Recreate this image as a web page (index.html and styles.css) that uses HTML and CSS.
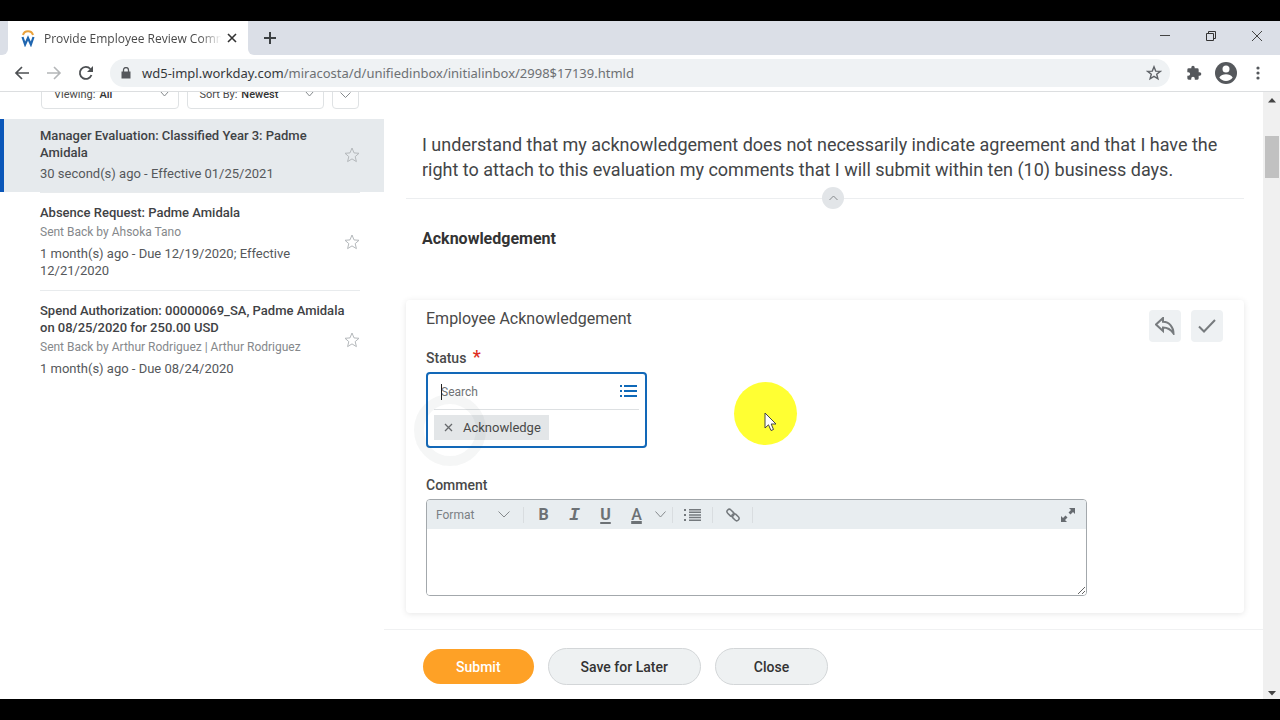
FILE: index.html
```html
<!DOCTYPE html>
<html lang="en">
<head>
    <meta charset="UTF-8">
    <meta name="viewport" content="width=device-width, initial-scale=1.0">
    <title>Provide Employee Review Comments</title>
    <link rel="stylesheet" href="styles.css">
</head>
<body>
    <div class="browser">
        <div class="tab-strip">
            <div class="tab-edge"></div>
            <div class="tab">
                <svg class="favicon" width="14" height="18" viewBox="0 0 14 18" fill="none">
                    <path d="M2 6a5.2 5.2 0 0 1 10 0" stroke="#e9a13b" stroke-width="2"/>
                    <path d="M1.5 8l2.6 7.500L7 9l2.900 6.500L12.500 8" stroke="#1f66b0" stroke-width="2.200"/>
                </svg>
                <span class="tab-title">Provide Employee Review Comm</span>
                <button class="icon-btn" aria-label="Close tab">
                    <svg width="10" height="10" viewBox="0 0 10 10" stroke="#333" stroke-width="1.600"><path d="M1 1l8 8M9 1l-8 8"/></svg>
                </button>
            </div>
            <div class="tab-rest">
                <button class="icon-btn" aria-label="New tab">
                    <svg width="12" height="12" viewBox="0 0 12 12" stroke="#3c4043" stroke-width="2"><path d="M6 0v12M0 6h12"/></svg>
                </button>
                <div class="window-controls">
                    <button class="icon-btn" aria-label="Minimize"><svg width="12" height="12" viewBox="0 0 12 12" stroke="#444"><path d="M1 5.500h10"/></svg></button>
                    <button class="icon-btn" aria-label="Restore"><svg width="12" height="12" viewBox="0 0 12 12" fill="none" stroke="#333"><path d="M1.500 3.500h7v7h-7zM3.500 3.500v-2h7v7h-2"/></svg></button>
                    <button class="icon-btn" aria-label="Close window"><svg width="12" height="12" viewBox="0 0 12 12" stroke="#444"><path d="M1 1l10 10M11 1L1 11"/></svg></button>
                </div>
            </div>
        </div>

        <div class="toolbar">
            <button class="icon-btn" aria-label="Back"><svg width="16" height="16" viewBox="0 0 16 16" fill="none" stroke="#4d5053" stroke-width="1.700"><path d="M15 8H2M8 2L2 8l6 6"/></svg></button>
            <button class="icon-btn" aria-label="Forward"><svg width="16" height="16" viewBox="0 0 16 16" fill="none" stroke="#b4b6b8" stroke-width="1.600"><path d="M1 8h13M8 2l6 6-6 6"/></svg></button>
            <button class="icon-btn" aria-label="Reload"><svg width="16" height="16" viewBox="0 0 16 16"><path d="M13.500 10A6 6 0 1 1 12.400 4" fill="none" stroke="#4d5053" stroke-width="1.800"/><path d="M15 1v6H9z" fill="#4d5053"/></svg></button>
            <div class="address">
                <svg width="10" height="12" viewBox="0 0 10 12"><path d="M0.500 4.500h9v7h-9z" fill="#55585c"/><path d="M2.500 5V3a2.500 2.500 0 0 1 5 0v2" fill="none" stroke="#55585c" stroke-width="1.300"/></svg>
                <span class="url">wd5-impl.workday.com<span class="url-path">/miracosta/d/unifiedinbox/initialinbox/2998$17139.htmld</span></span>
                <svg width="16" height="16" viewBox="0 0 16 16" fill="none" stroke="#5f6368" stroke-width="1.400"><path d="M8 1.800l1.700 4.300 4.600.3-3.600 2.900 1.200 4.500L8 11.300l-3.900 2.500 1.200-4.500L1.700 6.400l4.600-.3z"/></svg>
            </div>
            <div class="toolbar-end">
                <button class="icon-btn" aria-label="Extensions"><svg width="16" height="16" viewBox="0 0 24 24" fill="#55585c"><path d="M20.500 11H19V7a2 2 0 0 0-2-2h-4V3.500a2.500 2.500 0 0 0-5 0V5H4a2 2 0 0 0-2 2v3.800h1.500a2.700 2.700 0 0 1 0 5.400H2V20a2 2 0 0 0 2 2h3.800v-1.500a2.700 2.700 0 0 1 5.400 0V22H17a2 2 0 0 0 2-2v-4h1.500a2.500 2.500 0 0 0 0-5z"/></svg></button>
                <button class="icon-btn" aria-label="Profile"><svg width="22" height="22" viewBox="0 0 22 22"><circle cx="11" cy="11" r="11" fill="#55585c"/><circle cx="11" cy="7" r="3.500" fill="#fff"/><path d="M4.300 15.500c1.400-2.400 4-3.300 6.700-3.300s5.300.9 6.700 3.300c-1.500 2.200-4 3.500-6.700 3.500s-5.200-1.300-6.700-3.500z" fill="#fff"/></svg></button>
                <button class="icon-btn" aria-label="Menu"><svg width="16" height="16" viewBox="0 0 16 16" fill="#55585c"><circle cx="8" cy="3" r="1.600"/><circle cx="8" cy="8" r="1.600"/><circle cx="8" cy="13" r="1.600"/></svg></button>
            </div>
        </div>

        <div class="page">
            <aside class="inbox">
                <div class="filters">
                    <div class="filter">
                        <label for="viewing">Viewing:</label>
                        <select id="viewing"><option>All</option></select>
                        <svg class="chevron" width="9" height="6" viewBox="0 0 9 6"><path d="M0.500 0.500l4 4.500 4-4.500"/></svg>
                    </div>
                    <div class="filter">
                        <label for="sort">Sort By:</label>
                        <select id="sort"><option>Newest</option></select>
                        <svg class="chevron" width="9" height="6" viewBox="0 0 9 6"><path d="M0.500 0.500l4 4.500 4-4.500"/></svg>
                    </div>
                    <button class="filter-more" aria-label="More options">
                        <svg class="chevron" width="11" height="6" viewBox="0 0 11 6"><path d="M0.500 0.500l5 5 5-5"/></svg>
                    </button>
                </div>

                <div class="item selected">
                    <div class="item-body">
                        <div class="item-text">
                            <h3>Manager Evaluation: Classified Year 3: Padme Amidala</h3>
                            <p class="when">30 second(s) ago - Effective 01/25/2021</p>
                        </div>
                        <button class="icon-btn star" aria-label="Favorite"><svg width="16" height="16" viewBox="0 0 16 16"><path d="M8 1l2 4.900 5 .4-3.800 3.300 1.200 5L8 11.900l-4.400 2.700 1.200-5L1 6.300l5-.4z"/></svg></button>
                    </div>
                </div>
                <div class="item">
                    <div class="item-body">
                        <div class="item-text">
                            <h3>Absence Request: Padme Amidala</h3>
                            <p class="from">Sent Back by Ahsoka Tano</p>
                            <p class="when">1 month(s) ago - Due 12/19/2020; Effective 12/21/2020</p>
                        </div>
                        <button class="icon-btn star" aria-label="Favorite"><svg width="16" height="16" viewBox="0 0 16 16"><path d="M8 1l2 4.900 5 .4-3.800 3.300 1.200 5L8 11.900l-4.400 2.700 1.200-5L1 6.300l5-.4z"/></svg></button>
                    </div>
                </div>
                <div class="item">
                    <div class="item-body">
                        <div class="item-text">
                            <h3>Spend Authorization: 00000069_SA, Padme Amidala on 08/25/2020 for 250.00 USD</h3>
                            <p class="from">Sent Back by Arthur Rodriguez | Arthur Rodriguez</p>
                            <p class="when">1 month(s) ago - Due 08/24/2020</p>
                        </div>
                        <button class="icon-btn star" aria-label="Favorite"><svg width="16" height="16" viewBox="0 0 16 16"><path d="M8 1l2 4.900 5 .4-3.800 3.300 1.200 5L8 11.900l-4.400 2.700 1.200-5L1 6.300l5-.4z"/></svg></button>
                    </div>
                </div>
            </aside>

            <main class="review">
                <div class="content">
                    <p class="statement">I understand that my acknowledgement does not necessarily indicate agreement and that I have the right to attach to this evaluation my comments that I will submit within ten (10) business days.</p>
                    <div class="divider">
                        <button class="collapse" aria-label="Collapse"><svg class="chevron" width="9" height="6" viewBox="0 0 9 6"><path d="M0.500 5l4-4 4 4"/></svg></button>
                    </div>
                    <h2>Acknowledgement</h2>

                    <section class="card">
                        <div class="card-head">
                            <h3>Employee Acknowledgement</h3>
                            <div class="card-actions">
                                <button class="square" aria-label="Undo"><svg width="20" height="18" viewBox="0 0 20 18"><path d="M8 1L1 7.500 8 14v-3.500c5 0 7.500 1.500 10.500 6C18.500 10 14.500 5 8 4.800z"/></svg></button>
                                <button class="square" aria-label="Done"><svg width="18" height="14" viewBox="0 0 18 14"><path d="M1 7.500l5 5L17 1"/></svg></button>
                            </div>
                        </div>

                        <label class="field-label" for="status">Status <span class="required">*</span></label>
                        <div class="prompt">
                            <div class="prompt-search">
                                <input type="text" id="status" placeholder="Search">
                                <button class="icon-btn" aria-label="Show list"><svg width="17" height="13" viewBox="0 0 17 13" fill="#0f69b8"><path d="M0 0h2v2H0zM4 0h13v2H4zM0 5h2v2H0zM4 5h13v2H4zM0 10h2v2H0zM4 10h13v2H4z"/></svg></button>
                            </div>
                            <div class="prompt-values">
                                <div class="chip">
                                    <button class="icon-btn" aria-label="Remove"><svg width="9" height="9" viewBox="0 0 9 9" stroke="#66696c" stroke-width="1.300"><path d="M1 1l7 7M8 1L1 8"/></svg></button>
                                    Acknowledge
                                </div>
                            </div>
                            <span class="caret"></span>
                            <span class="ripple"></span>
                        </div>

                        <label class="field-label" for="comment">Comment</label>
                        <div class="editor">
                            <div class="editor-bar">
                                <button class="format">Format <svg class="chevron" width="12" height="7" viewBox="0 0 12 7"><path d="M0.500 0.500L6 6l5.500-5.500"/></svg></button>
                                <span class="sep"></span>
                                <button class="tool bold">B</button>
                                <button class="tool italic">I</button>
                                <button class="tool underline">U</button>
                                <button class="tool color">A</button>
                                <button class="tool arrow" aria-label="Text color"><svg class="chevron" width="11" height="7" viewBox="0 0 11 7"><path d="M0.500 0.500l5 5.500 5-5.500"/></svg></button>
                                <span class="sep"></span>
                                <button class="tool" aria-label="Bulleted list"><svg width="17" height="12" viewBox="0 0 17 12" fill="#74797d"><path d="M0 0h2v2H0zM0 5h2v2H0zM0 10h2v2H0zM5 0h12v1.500H5zM5 2.600h12v1.500H5zM5 5.200h12v1.500H5zM5 7.800h12v1.500H5zM5 10.400h12V12H5z"/></svg></button>
                                <span class="sep"></span>
                                <button class="tool" aria-label="Link"><svg width="14" height="14" viewBox="0 0 14 14" fill="none" stroke="#74797d" stroke-width="1.500"><rect x="0.500" y="2.500" width="8" height="4.600" rx="2.300" transform="rotate(45 4.500 4.800)"/><rect x="5.500" y="6.900" width="8" height="4.600" rx="2.300" transform="rotate(45 9.500 9.200)"/></svg></button>
                                <span class="sep"></span>
                                <button class="tool expand" aria-label="Expand"><svg width="14" height="14" viewBox="0 0 14 14"><path d="M14 0v6l-2-2-2.500 2.500-2-2L10 2 8 0zM0 14V8l2 2 2.500-2.500 2 2L4 12l2 2z" fill="#666b70"/></svg></button>
                            </div>
                            <textarea id="comment"></textarea>
                        </div>
                    </section>
                </div>

                <div class="actions">
                    <button class="btn submit">Submit</button>
                    <button class="btn save">Save for Later</button>
                    <button class="btn close">Close</button>
                </div>
            </main>

            <div class="scrollbar">
                <svg width="8" height="5" viewBox="0 0 8 5" fill="#444"><path d="M0 4.500L4 0l4 4.500z"/></svg>
                <div class="thumb"></div>
                <svg width="8" height="5" viewBox="0 0 8 5" fill="#444"><path d="M0 0l4 4.500L8 0z"/></svg>
            </div>
        </div>
    </div>

    <!-- click highlight and mouse pointer -->
    <div class="pointer">
        <svg width="14" height="20" viewBox="0 0 14 20"><path d="M1 1v15l3.500-3.200L7 18.500l2.500-1L7.200 12H12z" fill="#fff" stroke="#444"/></svg>
    </div>
</body>
</html>
```
FILE: styles.css
```css
* {
    box-sizing: border-box;
}
body {
    margin: 0;
    height: 100vh;
    padding: 21px 0;
    background: #000;
    font-family: Roboto, 'Liberation Sans', sans-serif;
    font-size: 14px;
    color: #494949;
    overflow: hidden;
}
h2, h3, p {
    margin: 0;
}
button, input, select, textarea {
    font-family: inherit;
    margin: 0;
}
.browser {
    display: flex;
    flex-direction: column;
    height: 100%;
    background: #fff;
}
.icon-btn {
    display: flex;
    align-items: center;
    justify-content: center;
    padding: 0;
    border: none;
    background: none;
}
.chevron {
    fill: none;
    stroke: #85898c;
    flex-shrink: 0;
}

/* browser frame */
.tab-strip {
    display: flex;
    height: 34px;
    font-family: 'Open Sans', 'Noto Sans', sans-serif;
}
.tab-edge {
    width: 8px;
    background: #dbdfe7;
    border-bottom-right-radius: 6px;
}
.tab {
    display: flex;
    align-items: center;
    width: 240px;
    padding: 0 11px 0 13px;
    background: #fff;
}
.tab-title {
    flex: 1;
    margin-left: 9px;
    font-size: 12px;
    white-space: nowrap;
    -webkit-mask-image: linear-gradient(to right, #000 85%, transparent 97%);
    mask-image: linear-gradient(to right, #000 85%, transparent 97%);
}
.tab-rest {
    flex: 1;
    display: flex;
    align-items: center;
    justify-content: space-between;
    padding: 0 17px 0 16px;
    background: #dbdfe7;
    border-bottom-left-radius: 6px;
}
.window-controls {
    display: flex;
    gap: 34px;
    padding-bottom: 4px;
}
.toolbar {
    display: flex;
    align-items: center;
    gap: 16px;
    height: 37px;
    padding: 0 14px;
    border-bottom: 1px solid #dcdee0;
}
.toolbar-end {
    display: flex;
    align-items: center;
    gap: 13px;
}
.address {
    flex: 1;
    display: flex;
    align-items: center;
    gap: 11px;
    height: 28px;
    padding: 0 8px 0 11px;
    background: #eff2f4;
    border-radius: 14px;
    font-family: 'Noto Sans', 'Open Sans', sans-serif;
}
.url {
    flex: 1;
    font-size: 13px;
    color: #35383b;
}
.url-path {
    color: #6d7073;
}

/* inbox list */
.page {
    flex: 1;
    display: flex;
    min-height: 0;
}
.inbox {
    width: 30%;
    overflow: hidden;
}
.filters {
    display: flex;
    gap: 8px;
    margin-top: -15px;
    padding: 0 25px 10px 41px;
}
.filter {
    flex: 1;
    display: flex;
    align-items: center;
    height: 32px;
    padding: 2px 9px 0 12px;
    border: 1px solid #dfe2e4;
    border-radius: 4px;
    font-size: 11px;
}
.filter select {
    flex: 1;
    min-width: 0;
    padding: 0 4px;
    border: none;
    background: none;
    appearance: none;
    font-size: 11px;
    font-weight: 500;
    color: #333;
}
.filter-more {
    width: 27px;
    padding: 0;
    border: 1px solid #dfe2e4;
    border-radius: 4px;
    background: none;
}
.item {
    padding: 0 24px 0 40px;
}
.item-body {
    display: flex;
    align-items: center;
    padding: 11px 0;
    border-top: 1px solid #e8ebed;
}
.item.selected {
    padding-left: 36px;
    border-left: 4px solid #0b57b9;
    background: #e6eaed;
}
.item.selected .item-body {
    padding: 8px 0 10px;
    border-top: none;
}
.item-text {
    flex: 1;
    margin-right: -10px;
}
.item h3 {
    font-size: 13px;
    font-weight: 500;
    line-height: 17px;
    color: #3f4245;
}
.from {
    margin-top: 2px;
    font-size: 12px;
    line-height: 18px;
    color: #85888b;
}
.when {
    margin-top: 4px;
    padding-right: 50px;
    font-size: 13px;
    line-height: 17px;
    color: #55585b;
}
.star svg {
    fill: none;
    stroke: #b4b8bb;
}

/* review form */
.review {
    flex: 1;
    display: flex;
    flex-direction: column;
    min-width: 0;
}
.content {
    flex: 1;
    min-height: 0;
    padding: 40px 19px 0 22px;
}
.statement {
    padding: 0 16px;
    font-size: 18px;
    line-height: 25px;
    color: #434547;
}
.divider {
    display: flex;
    align-items: center;
    justify-content: center;
    height: 24px;
    margin-top: 4px;
    padding-left: 16px;
    background: linear-gradient(#eceef0, #eceef0) center / 100% 1px no-repeat;
}
.collapse {
    display: flex;
    align-items: center;
    justify-content: center;
    width: 22px;
    height: 22px;
    padding: 0;
    border: none;
    border-radius: 50%;
    background: #e2e5e8;
}
h2 {
    margin: 18px 16px 50px;
    font-size: 16px;
    font-weight: 700;
    line-height: 22px;
    color: #333;
}
.card {
    padding: 9px 21px 17px 20px;
    border-radius: 4px;
    box-shadow: 0 1px 6px rgba(0, 0, 0, 0.1);
}
.card-head {
    display: flex;
    justify-content: space-between;
    height: 38px;
}
.card-head h3 {
    font-size: 16px;
    font-weight: 400;
    line-height: 20px;
}
.card-actions {
    display: flex;
    gap: 10px;
    padding-top: 1px;
}
.square {
    display: flex;
    align-items: center;
    justify-content: center;
    width: 32px;
    height: 32px;
    padding: 0;
    border: none;
    border-radius: 4px;
    background: #eef1f3;
}
.square svg {
    fill: none;
    stroke: #777b7e;
    stroke-width: 2;
}
.field-label {
    display: block;
    height: 25px;
    font-size: 14px;
    font-weight: 500;
    line-height: 22px;
}
.required {
    margin-left: 3px;
    font-size: 18px;
    line-height: 18px;
    color: #de2e21;
}
.prompt {
    position: relative;
    width: 221px;
    height: 76px;
    margin-bottom: 26px;
    padding: 0 6px;
    border: 2px solid #1268b8;
    border-radius: 4px;
}
.prompt-search {
    display: flex;
    align-items: center;
    height: 36px;
    padding: 0 2px 0 7px;
    border-bottom: 1px solid #dde0e2;
}
.prompt-search input {
    flex: 1;
    min-width: 0;
    padding: 0;
    border: none;
    outline: none;
    font-size: 12px;
}
.prompt-search input::placeholder {
    color: #6f7275;
}
.chip {
    display: inline-flex;
    align-items: center;
    gap: 10px;
    height: 25px;
    margin-top: 5px;
    padding: 0 8px 0 10px;
    background: #e3e6e8;
    font-size: 13px;
}
.caret {
    position: absolute;
    left: 13px;
    top: 10px;
    width: 1px;
    height: 16px;
    background: #222;
}
.ripple {
    position: absolute;
    left: -14px;
    top: 20px;
    width: 72px;
    height: 72px;
    border: 10px solid rgba(60, 70, 80, 0.05);
    border-radius: 50%;
}
.editor {
    width: 661px;
    max-width: 100%;
    border: 1px solid #a3a8ac;
    border-radius: 4px;
    overflow: hidden;
}
.editor-bar {
    display: flex;
    align-items: center;
    height: 29px;
    padding-right: 10px;
    background: #e8edf0;
}
.format {
    display: flex;
    align-items: center;
    justify-content: space-between;
    width: 92px;
    padding: 0 9px;
    border: none;
    background: none;
    font-size: 12px;
    color: #7b8084;
}
.sep {
    width: 1px;
    height: 16px;
    margin: 0 4px;
    background: #d9dde0;
}
.tool {
    display: flex;
    align-items: center;
    justify-content: center;
    width: 31px;
    height: 24px;
    padding: 0;
    border: none;
    background: none;
    font-size: 16px;
    font-weight: 700;
    color: #6c7175;
}
.italic {
    font-family: 'Liberation Mono', monospace;
    font-style: italic;
    font-size: 18px;
}
.underline {
    text-decoration: underline 2px;
    text-underline-offset: 2px;
}
.color {
    text-decoration: underline 3px;
    text-underline-offset: 1px;
    font-weight: 500;
}
.arrow {
    width: 16px;
}
.expand {
    width: 16px;
    margin-left: auto;
}
.editor textarea {
    display: block;
    width: 100%;
    height: 66px;
    border: none;
    outline: none;
}
.actions {
    display: flex;
    align-items: center;
    gap: 14px;
    height: 70px;
    padding: 4px 39px 0;
    border-top: 1px solid #f0f1f2;
}
.btn {
    height: 37px;
    padding: 0 32px;
    border: 1px solid #d3d6d8;
    border-radius: 19px;
    background: #eef1f2;
    font-size: 14px;
    font-weight: 500;
    color: #333;
}
.submit {
    height: 35px;
    padding: 0 33px;
    border: none;
    background: #fea126;
    color: #fff;
}
.close {
    padding: 0 38px;
}
.scrollbar {
    display: flex;
    flex-direction: column;
    align-items: center;
    width: 17px;
    padding: 6px 0 3px;
    background: #f0f0f0;
}
.thumb {
    width: 14px;
    height: 42px;
    margin: 33px 0 auto;
    background: #c1c1c1;
}
.pointer {
    position: absolute;
    left: 734px;
    top: 382px;
    width: 63px;
    height: 63px;
    padding: 30px 0 0 30px;
    border-radius: 50%;
    background: #ffff33;
}
```
